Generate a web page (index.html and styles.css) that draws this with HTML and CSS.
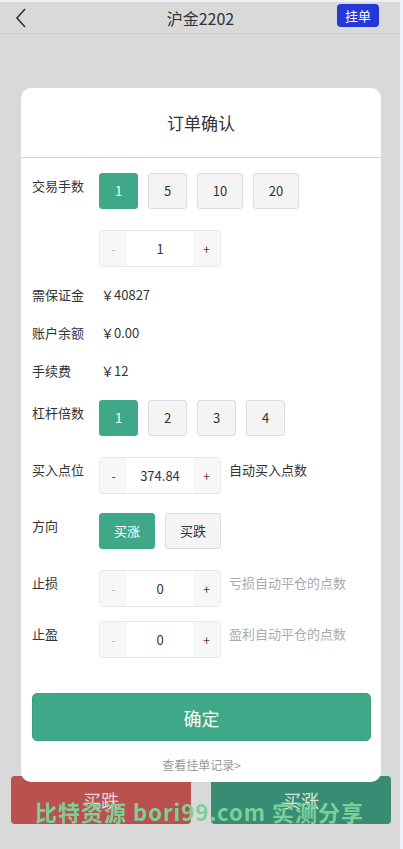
FILE: index.html
```html
<!DOCTYPE html>
<html lang="zh">
<head>
    <meta charset="UTF-8">
    <meta name="viewport" content="width=device-width, initial-scale=1.0">
    <title>沪金2202</title>
    <link rel="stylesheet" href="styles.css">
</head>
<body>
    <div class="app">
        <div class="header">
            <a class="back" href="javascript:void(0);">
                <svg width="14" height="20" viewBox="0 0 14 20"><polyline points="11,1 3,10 11,19" fill="none" stroke="#333" stroke-width="1.6"/></svg>
            </a>
            <div class="header-title">沪金2202</div>
            <a class="pending-btn" href="javascript:void(0);">挂单</a>
        </div>

        <div class="content"></div>

        <div class="trade-bar">
            <div class="trade-btn down">买跌</div>
            <div class="trade-btn up">买涨</div>
        </div>

        <!-- 订单确认弹窗 -->
        <div class="modal">
            <div class="modal-title">订单确认</div>
            <div class="form">
                <div class="row first">
                    <div class="label">交易手数</div>
                    <div class="options">
                        <span class="opt active">1</span>
                        <span class="opt">5</span>
                        <span class="opt wide">10</span>
                        <span class="opt wide">20</span>
                    </div>
                </div>

                <div class="row gap-step">
                    <div class="label"></div>
                    <div class="stepper">
                        <span class="step minus muted">-</span>
                        <span class="step-val">1</span>
                        <span class="step plus">+</span>
                    </div>
                </div>

                <div class="row text-row">
                    <div class="label">需保证金</div>
                    <div class="value">￥40827</div>
                </div>
                <div class="row text-row">
                    <div class="label">账户余额</div>
                    <div class="value">￥0.00</div>
                </div>
                <div class="row text-row">
                    <div class="label">手续费</div>
                    <div class="value">￥12</div>
                </div>

                <div class="row gap-btn">
                    <div class="label">杠杆倍数</div>
                    <div class="options">
                        <span class="opt active">1</span>
                        <span class="opt">2</span>
                        <span class="opt">3</span>
                        <span class="opt">4</span>
                    </div>
                </div>

                <div class="row gap-step">
                    <div class="label">买入点位</div>
                    <div class="stepper">
                        <span class="step minus">-</span>
                        <span class="step-val">374.84</span>
                        <span class="step plus">+</span>
                    </div>
                    <div class="hint dark">自动买入点数</div>
                </div>

                <div class="row gap-btn">
                    <div class="label">方向</div>
                    <div class="options">
                        <span class="opt dir active">买涨</span>
                        <span class="opt dir">买跌</span>
                    </div>
                </div>

                <div class="row gap-step">
                    <div class="label">止损</div>
                    <div class="stepper">
                        <span class="step minus muted">-</span>
                        <span class="step-val">0</span>
                        <span class="step plus">+</span>
                    </div>
                    <div class="hint">亏损自动平仓的点数</div>
                </div>

                <div class="row gap-small">
                    <div class="label">止盈</div>
                    <div class="stepper">
                        <span class="step minus muted">-</span>
                        <span class="step-val">0</span>
                        <span class="step plus">+</span>
                    </div>
                    <div class="hint">盈利自动平仓的点数</div>
                </div>

                <div class="confirm-btn">确定</div>
                <div class="record-link">查看挂单记录&gt;</div>
            </div>
        </div>

        <div class="watermark">比特资源 bori99.com 实测分享</div>
    </div>
</body>
</html>
```

FILE: styles.css
```css
* {
    box-sizing: border-box;
    margin: 0;
    padding: 0;
}

body {
    background-color: #edf1f8;
    font-family: "Noto Sans CJK SC", "Noto Sans", sans-serif;
    color: #333;
    overflow: hidden;
}

.app {
    width: 400px;
    height: 847px;
    margin-top: 2px;
    background-color: #d9d9d9;
    position: relative;
    display: flex;
    flex-direction: column;
}

.header {
    height: 32px;
    border-bottom: 1px solid #c8c8c8;
    display: flex;
    align-items: center;
    justify-content: space-between;
    padding: 0 21px 0 14px;
}

.back {
    display: flex;
    width: 40px;
}

.header-title {
    font-size: 16px;
    line-height: 20px;
    color: #333;
    margin-left: 10px;
}

.pending-btn {
    width: 42px;
    height: 23px;
    line-height: 23px;
    margin-bottom: 5px;
    text-align: center;
    font-size: 13px;
    color: #fff;
    background-color: #2437d8;
    border-radius: 4px;
    text-decoration: none;
}

.content {
    flex: 1;
}

.trade-bar {
    display: flex;
    gap: 20px;
    padding: 0 9px 25px 11px;
}

.trade-btn {
    flex: 1;
    height: 48px;
    line-height: 48px;
    text-align: center;
    font-size: 18px;
    border-radius: 4px;
    color: #e6d6d6;
}

.trade-btn.down {
    background-color: #b9524e;
}

.trade-btn.up {
    background-color: #388c74;
    color: #d8e6e0;
}

.modal {
    position: absolute;
    top: 86px;
    left: 21px;
    width: 360px;
    background-color: #fff;
    border-radius: 10px;
}

.modal-title {
    height: 70px;
    line-height: 70px;
    text-align: center;
    font-size: 17px;
    color: #333;
    border-bottom: 1px solid #d2d2d2;
}

.form {
    padding: 15px 10px 9px 11px;
}

.row {
    display: flex;
    align-items: flex-start;
}

.row.text-row {
    margin-top: 18px;
    align-items: center;
    height: 20px;
}

.row.gap-btn {
    margin-top: 19px;
}

.row.gap-step {
    margin-top: 21px;
}

.row.gap-small {
    margin-top: 14px;
}

.label {
    width: 67px;
    flex-shrink: 0;
    font-size: 13px;
    line-height: 20px;
    padding-top: 3px;
    color: #333;
}

.text-row .label {
    padding-top: 0;
}

.value {
    font-size: 13px;
    line-height: 20px;
    color: #333;
    padding-left: 2px;
}

.options {
    display: flex;
    gap: 10px;
}

.opt {
    width: 39px;
    height: 36px;
    line-height: 34px;
    text-align: center;
    font-size: 13px;
    color: #333;
    background-color: #f4f4f4;
    border: 1px solid #dcdce2;
    border-radius: 3px;
}

.opt.wide {
    width: 46px;
}

.opt.dir {
    width: 56px;
}

.opt.active {
    background-color: #3fa888;
    border-color: #3fa888;
    color: #fff;
}

.stepper {
    display: flex;
    width: 122px;
    height: 37px;
    border: 1px solid #e8e8e8;
    border-radius: 3px;
    overflow: hidden;
    flex-shrink: 0;
}

.step {
    width: 27px;
    line-height: 35px;
    text-align: center;
    font-size: 12px;
    background-color: #f7f7f7;
    color: #333;
}

.step.muted {
    color: #aaa;
}

.step.plus {
    color: #6b2a3a;
}

.step-val {
    flex: 1;
    line-height: 35px;
    text-align: center;
    font-size: 13px;
    color: #2b3550;
    background-color: #fff;
}

.hint {
    font-size: 13px;
    line-height: 20px;
    padding-top: 3px;
    margin-left: 8px;
    color: #aaa;
    white-space: nowrap;
}

.hint.dark {
    color: #333;
}

.confirm-btn {
    margin-top: 35px;
    height: 48px;
    line-height: 48px;
    text-align: center;
    font-size: 18px;
    color: #fff;
    background-color: #3fa888;
    border: 1px solid #3a9a7d;
    border-radius: 5px;
}

.record-link {
    margin-top: 16px;
    text-align: center;
    font-size: 12px;
    line-height: 16px;
    color: #999;
}

.watermark {
    position: absolute;
    top: 794px;
    left: 35px;
    font-size: 22px;
    font-weight: bold;
    line-height: 30px;
    color: #7dcf9a;
    letter-spacing: 1px;
    white-space: nowrap;
    pointer-events: none;
}
```
